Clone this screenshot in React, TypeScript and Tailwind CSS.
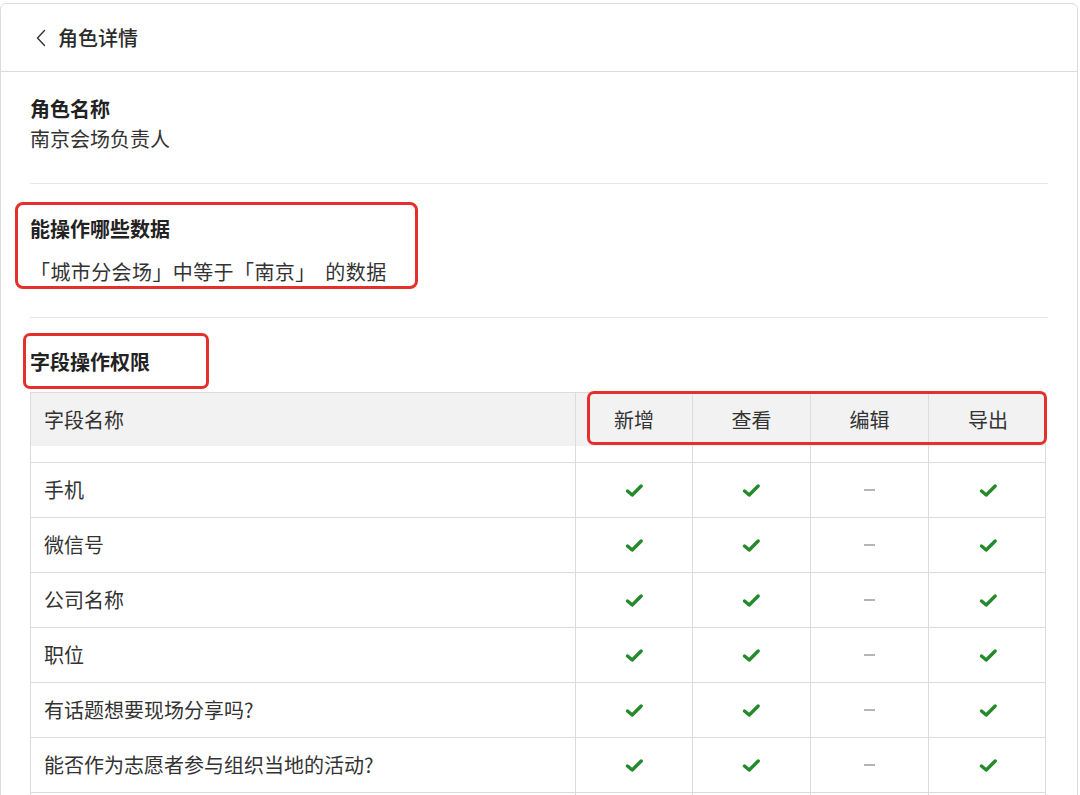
import React from "react";

const rows = [
  "手机",
  "微信号",
  "公司名称",
  "职位",
  "有话题想要现场分享吗?",
  "能否作为志愿者参与组织当地的活动?",
  "",
];

function Check() {
  return (
    <svg width="19" height="15" viewBox="0 0 19 15" fill="none">
      <path
        d="M2.5 8 L7.2 12 L16.2 3"
        stroke="#248a2c"
        strokeWidth="3.4"
        strokeLinecap="round"
        strokeLinejoin="round"
      />
    </svg>
  );
}

function Dash() {
  return <div className="w-[11px] h-[1.5px] bg-[#b5b5b5]" />;
}

export default function App() {
  return (
    <div
      className="relative w-[1080px] h-[795px] overflow-hidden bg-white text-[#333]"
      style={{ fontFamily: '"Noto Sans CJK SC", "Noto Sans", sans-serif' }}
    >
      <div className="mt-[3px] w-[1078px] border border-[#dcdcdc] rounded-t-[6px] bg-white">
        {/* Header */}
        <div className="h-[68px] border-b border-[#dcdcdc] flex items-center pl-[34px]">
          <svg width="12" height="20" viewBox="0 0 12 20" fill="none" className="mr-[11px]">
            <path d="M9.5 2.5 L2.5 10 L9.5 17.5" stroke="#333" strokeWidth="1.4" strokeLinecap="round" strokeLinejoin="round" />
          </svg>
          <span className="text-[20px] leading-[30px] font-medium text-[#2b2b2b]">角色详情</span>
        </div>

        <div className="px-[29px]">
          {/* Section 1 */}
          <div className="pt-[22px] pb-[29px] border-b border-[#e6e6e6]">
            <div className="text-[20px] leading-[30px] font-bold text-[#222]">角色名称</div>
            <div className="text-[20px] leading-[30px]">南京会场负责人</div>
          </div>

          {/* Section 2 */}
          <div className="pt-[30px] pb-[30px] border-b border-[#e6e6e6]">
            <div className="text-[20px] leading-[30px] font-bold text-[#222]">能操作哪些数据</div>
            <div className="mt-[13px] text-[20px] leading-[30px] tracking-[0.4px]">「城市分会场」中等于「南京」&nbsp;&nbsp;的数据</div>
          </div>

          {/* Section 3 */}
          <div className="pt-[29px]">
            <div className="text-[20px] leading-[30px] font-bold text-[#222]">字段操作权限</div>
            <div className="mt-[15px] w-[1016px] border-t border-l border-r border-[#dcdcdc]">
              {/* header */}
              <div className="grid grid-cols-[545px_117px_118px_118px_118px] h-[53px] bg-[#f2f2f2] text-[20px]">
                <div className="flex items-center pl-[13px] border-r border-[#dcdcdc]">字段名称</div>
                <div className="flex items-center justify-center border-r border-[#dcdcdc]">新增</div>
                <div className="flex items-center justify-center border-r border-[#dcdcdc]">查看</div>
                <div className="flex items-center justify-center border-r border-[#dcdcdc]">编辑</div>
                <div className="flex items-center justify-center">导出</div>
              </div>
              {/* spacer */}
              <div className="grid grid-cols-[545px_117px_118px_118px_118px] h-[17px] border-b border-[#dcdcdc]">
                <div className="border-r border-[#dcdcdc]" />
                <div className="border-r border-[#dcdcdc]" />
                <div className="border-r border-[#dcdcdc]" />
                <div className="border-r border-[#dcdcdc]" />
                <div />
              </div>
              {rows.map((r, i) => (
                <div
                  key={i}
                  className="grid grid-cols-[545px_117px_118px_118px_118px] h-[55px] border-b border-[#dcdcdc] text-[20px]"
                >
                  <div className="flex items-center pl-[13px] border-r border-[#dcdcdc]">{r}</div>
                  <div className="flex items-center justify-center border-r border-[#dcdcdc]">{r && <Check />}</div>
                  <div className="flex items-center justify-center border-r border-[#dcdcdc]">{r && <Check />}</div>
                  <div className="flex items-center justify-center border-r border-[#dcdcdc]">{r && <Dash />}</div>
                  <div className="flex items-center justify-center">{r && <Check />}</div>
                </div>
              ))}
            </div>
          </div>
        </div>
      </div>

      {/* Annotation boxes */}
      <div className="absolute left-[15px] top-[202px] w-[403px] h-[87px] border-[3px] border-[#e3302a] rounded-[8px]" />
      <div className="absolute left-[23px] top-[333px] w-[186px] h-[56px] border-[3px] border-[#e3302a] rounded-[7px]" />
      <div className="absolute left-[587px] top-[391px] w-[460px] h-[54px] border-[3px] border-[#e3302a] rounded-[7px]" />
    </div>
  );
}
